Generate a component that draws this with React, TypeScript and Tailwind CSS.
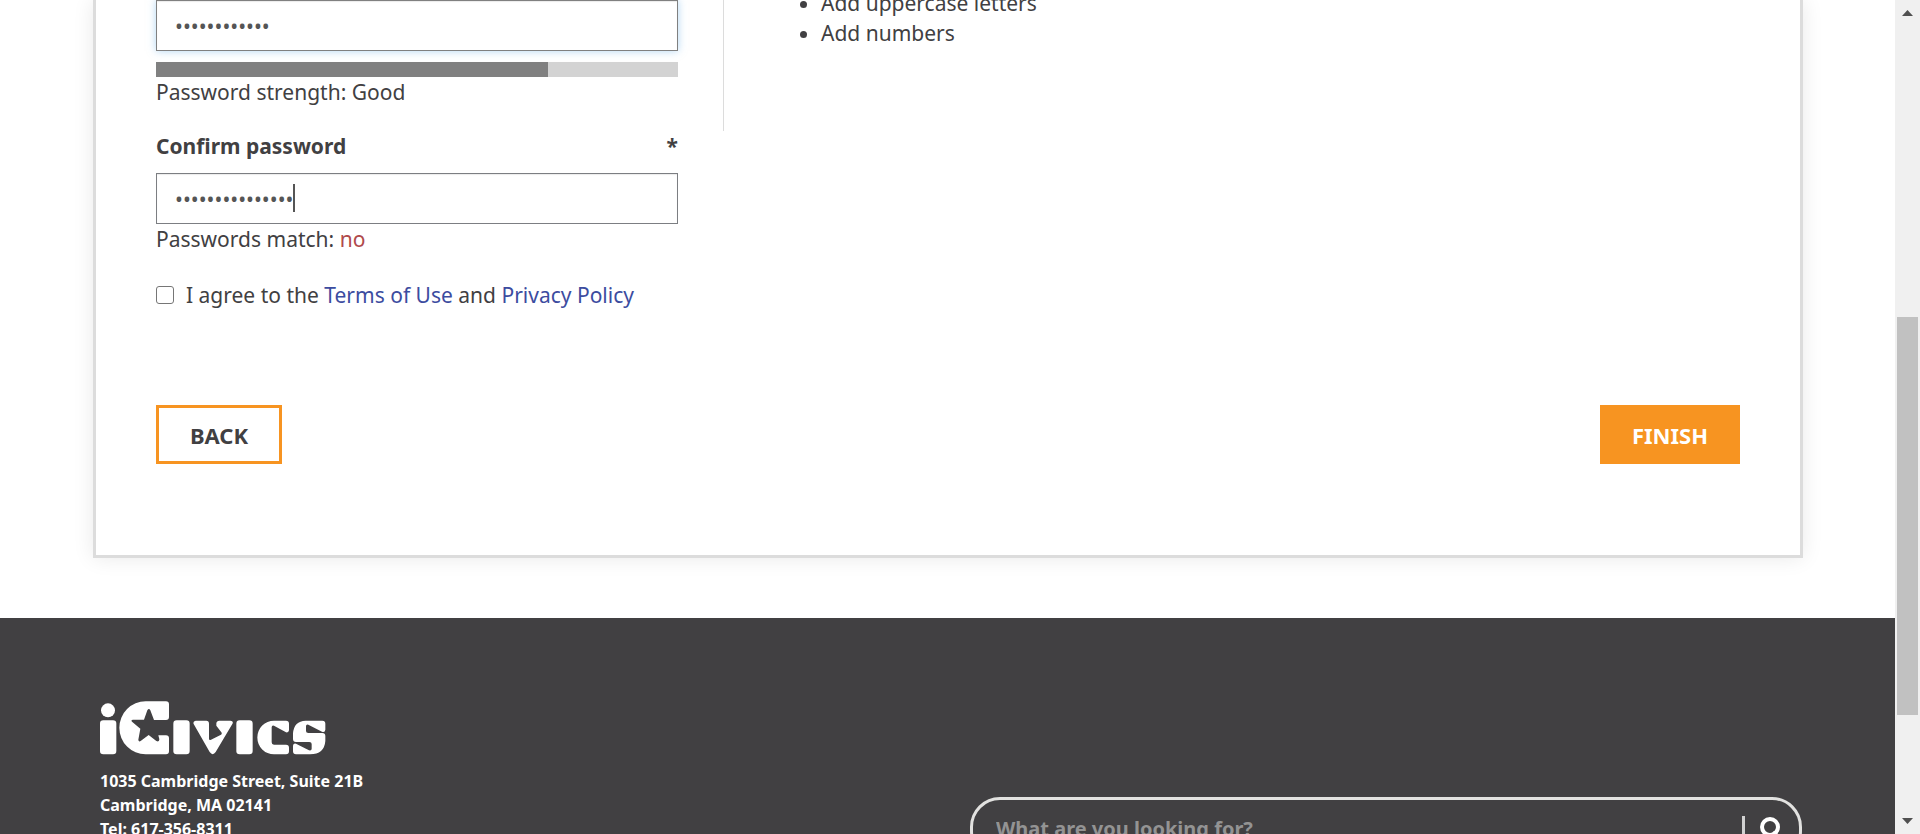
function Logo() {
  return (
    <svg viewBox="0 0 678 162" className="block h-[54px] w-[226px]" fill="#fff" role="img" aria-label="iCivics">
      <circle cx="24" cy="28" r="21" />
      <rect x="0" y="58" width="49" height="102" rx="10" />
      <path d="M137 1H198Q207 1 207 10V48Q207 57 198 57H162L151 28Q147 20 142 28L132 56H99Q91 57 97 63L121 83L115 116Q116 125 123 119L146 102L169 120Q178 124 178 115L175 103H198Q207 103 207 112V151Q207 160 198 160H137A79 79.5 0 0 1 137 1Z" />
      <rect x="220" y="58" width="49" height="102" rx="10" />
      <path d="M287 59H319Q327 59 327 68V114Q328 119 333 116L363 101Q367 98 364 94L349 74V67Q350 59 358 59H391Q402 60 397 69L347 153Q338 166 329 153L281 69Q278 60 287 59Z" />
      <rect x="409" y="58" width="49" height="102" rx="10" />
      <path d="M522 59H558Q567 59 567 68V88Q566 96 558 94L522 74Q515 72 515 79V124Q515 131 522 131H558Q567 131 567 140V151Q567 160 558 160H522A50 50.5 0 0 1 522 59Z" />
      <path d="M617 59H667Q676 59 676 68V86Q675 95 666 92L625 71Q618 69 618 76V90Q618 96 625 96H667Q676 96 676 105V120Q673 160 630 160H588Q579 160 579 151V134Q580 126 588 128L627 148Q635 150 635 143V129Q635 123 628 123H588Q579 123 579 114V97Q582 60 617 59Z" />
    </svg>
  );
}

function Scrollbar() {
  return (
    <div aria-hidden="true" className="flex w-[25px] shrink-0 flex-col items-center bg-[#f0f0f0] py-[10px]">
      <svg viewBox="0 0 11 6" className="h-[6px] w-[11px]" fill="#505050">
        <path d="M5.5 0L11 6H0Z" />
      </svg>
      <div className="flex w-full flex-1 flex-col px-[2px]">
        <div className="grow-[301]" />
        <div className="grow-[398] bg-[#c1c1c1]" />
        <div className="grow-[103]" />
      </div>
      <svg viewBox="0 0 11 6" className="h-[6px] w-[11px]" fill="#505050">
        <path d="M0 0H11L5.5 6Z" />
      </svg>
    </div>
  );
}

export default function App() {
  return (
    <div className="flex h-screen overflow-hidden bg-white font-['Noto_Sans',sans-serif] text-[21px] leading-[30px] text-[#414042]">
      <div className="flex min-w-0 flex-1 flex-col">
        <main className="pr-[92px] pb-[60px] pl-[93px]">
          <form
            className="border-x-[3px] border-b-[3px] border-[#dcdcdc] px-[60px] pb-[91px] shadow-[0_0_20px_rgba(0,0,0,0.09)]"
            onSubmit={(e) => e.preventDefault()}
          >
            <div className="flex">
              <div className="w-[568px] border-r border-[#dcdcdc] pr-[45px] pb-6">
                <input
                  type="password"
                  aria-label="Password"
                  defaultValue="password1234"
                  className="block h-[51px] w-full border border-[#808080] px-[18px] text-[#555] shadow-[inset_0_1px_1px_rgba(0,0,0,0.08),0_0_8px_rgba(102,175,233,0.5)] outline-none"
                />
                <div className="mt-[11px] h-[15px] bg-[#d3d3d3]">
                  <div className="h-full w-3/4 bg-[#808080]" />
                </div>
                <p>Password strength: Good</p>
              </div>
              <ul className="-mt-3 list-disc pl-[97px]">
                <li>Add uppercase letters</li>
                <li>Add numbers</li>
              </ul>
            </div>

            <div className="w-[522px]">
              <label htmlFor="confirm" className="flex justify-between font-bold">
                <span>Confirm password</span>
                <span>*</span>
              </label>
              <div className="relative mt-3">
                <input
                  id="confirm"
                  type="password"
                  defaultValue="password1234567"
                  className="block h-[51px] w-full border border-[#7c7e82] px-[18px] text-[#555] shadow-[inset_0_1px_1px_rgba(0,0,0,0.08)] outline-none"
                />
                <span className="absolute top-[11px] left-[137px] h-7 w-[2px] bg-[#555]" />
              </div>
              <p>
                Passwords match: <span className="text-[#b04a4c]">no</span>
              </p>
            </div>

            <div className="mt-[26px] flex items-center gap-3">
              <input
                id="agree"
                type="checkbox"
                className="size-[18px] appearance-none rounded-[3px] border border-[#767676] bg-white"
              />
              <label htmlFor="agree">
                I agree to the{" "}
                <a href="#terms" className="text-[#3c4c9f]">
                  Terms of Use
                </a>{" "}
                and{" "}
                <a href="#privacy" className="text-[#3c4c9f]">
                  Privacy Policy
                </a>
              </label>
            </div>

            <div className="mt-[95px] flex justify-between font-bold">
              <button type="button" className="h-[59px] w-[126px] border-[3px] border-[#f79421] bg-white text-[22px]">
                BACK
              </button>
              <button type="submit" className="h-[59px] w-[140px] bg-[#f79421] text-[22px] text-white">
                FINISH
              </button>
            </div>
          </form>
        </main>

        <footer className="flex min-h-[216px] flex-1 justify-between bg-[#414042] pr-[93px] pl-[100px] font-bold text-white">
          <div className="pt-[83px]">
            <Logo />
            <address className="mt-[14px] text-base leading-6 not-italic">
              1035 Cambridge Street, Suite 21B
              <br />
              Cambridge, MA 02141
              <br />
              Tel: 617-356-8311
            </address>
          </div>
          <div className="w-[832px] pt-[179px]">
            <div className="flex h-[64px] items-center rounded-[30px] border-[3px] border-[#e2e2e0] pr-[17px] pl-[23px]">
              <input
                type="search"
                aria-label="Search"
                placeholder="What are you looking for?"
                className="min-w-0 flex-1 bg-transparent text-xl outline-none placeholder:text-[#939393]"
              />
              <span className="mr-[15px] h-[26px] w-[3px] bg-[#d1d1d1]" />
              <button type="button" aria-label="Submit search">
                <svg viewBox="0 0 22 24" className="h-6 w-[22px]" fill="none" stroke="#fff" strokeWidth="4">
                  <circle cx="10" cy="10" r="8" />
                  <path d="M14.5 16L20 22.500" strokeLinecap="round" />
                </svg>
              </button>
            </div>
          </div>
        </footer>
      </div>
      <Scrollbar />
    </div>
  );
}
